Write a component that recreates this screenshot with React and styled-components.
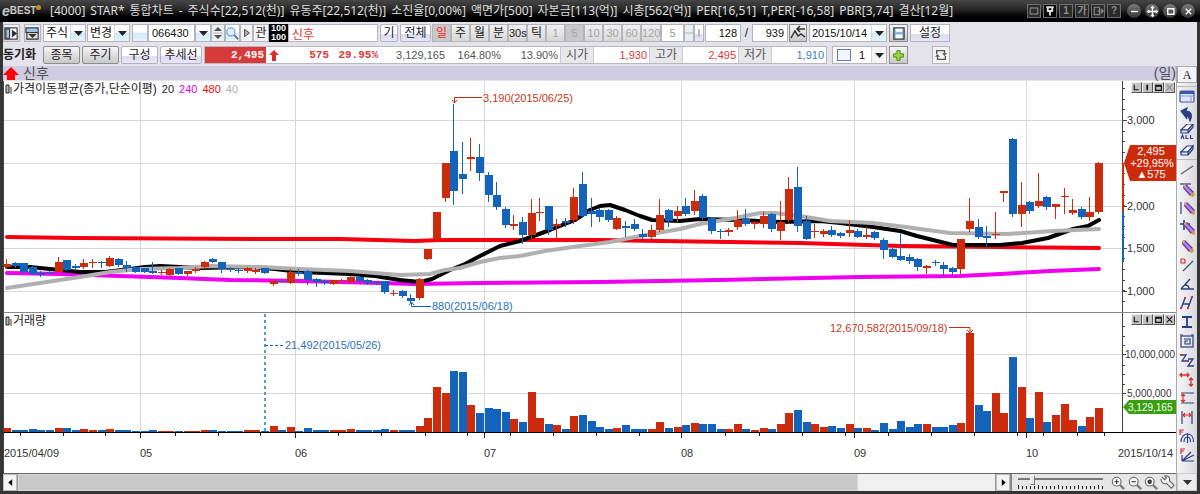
import React from "react";
import styled, { createGlobalStyle, css } from "styled-components";

const RED = "#cc2b0c";
const BLUE = "#1463bb";

const GlobalStyle = createGlobalStyle`
  * { box-sizing: border-box; }
  body {
    margin: 0;
    background: #333;
    font-family: "Liberation Sans", "Noto Sans CJK KR", sans-serif;
    font-size: 12px;
    line-height: 14px;
    color: #222;
  }
  button, input, select { font: inherit; color: inherit; margin: 0; }
`;

/* ---------- window frame ---------- */

const Window = styled.div`
  border: solid #353535;
  border-width: 0 3px 3px;
  background: #e4e2ea;
  min-width: 1100px;
`;

const TitleBar = styled.header`
  display: flex;
  align-items: center;
  height: 22px;
  margin: 0 -3px;
  padding: 0 5px 0 2px;
  background: linear-gradient(#464646, #2a2a2a 40%, #000 75%, #000);
  color: #dcdcdc;
  white-space: nowrap;
`;

const Logo = styled.div`
  display: flex;
  align-items: center;
  width: 48px;
  font-size: 10px;
  font-weight: bold;
  color: #c8c8c8;
`;

const LogoE = styled.span`
  font-size: 14px;
  font-style: italic;
`;

const LogoDot = styled.i`
  width: 5px;
  height: 5px;
  margin-bottom: 8px;
  border-radius: 50%;
  background: #c98a2c;
`;

const Title = styled.h1`
  display: flex;
  flex: 1;
  gap: 5px;
  min-width: 0;
  margin: 0;
  font-family: "Noto Sans", "Noto Sans CJK KR", sans-serif;
  font-size: 12px;
  font-weight: normal;
  line-height: 18px;
  overflow: hidden;
`;

const TitleTools = styled.div`
  display: flex;
  gap: 2px;
  margin-right: 6px;
`;

const TitleTool = styled.button`
  display: grid;
  place-items: center;
  width: 14px;
  height: 14px;
  padding: 0;
  border: 1px solid #6e6e6e;
  background: ${(p) => (p.$on ? "#000" : "#2c2c2c")};
  color: ${(p) => (p.$on ? "#ddd" : "#8c8c8c")};
  font-size: 10px;
  font-weight: bold;
  line-height: 10px;
`;

const WindowButtons = styled.div`
  display: flex;
  gap: 4px;
`;

const RoundButton = styled.button`
  display: grid;
  place-items: center;
  width: 14px;
  height: 14px;
  padding: 0;
  border: 0;
  border-radius: 50%;
  background: linear-gradient(#7a7a7a, #333);
  color: #fff;
`;

/* ---------- toolbars ---------- */

const ToolRow = styled.div`
  display: flex;
  align-items: center;
  height: 22px;
  white-space: nowrap;
`;

const Gap = styled.span`
  flex: none;
  width: ${(p) => p.$w}px;
`;

const frame = css`
  flex: none;
  width: ${(p) => p.$w}px;
  height: 18px;
  border: 1px solid #b4b4bc;
  background: #fff;
`;

const looks = {
  lilac: "linear-gradient(#fff 55%, #dcdcf0 60%, #e6e6f6)",
  grey: "linear-gradient(#f6f6f6, #c8c8c8)",
  tab: "linear-gradient(#f0f0f0, #d8d8d8)",
  pressed: "#c9c9cb",
  plain: "#f4f4f6",
  blue: "linear-gradient(#fff 45%, #d3e9f8 50%, #e4f3fc)",
};

const ToolButton = styled.button`
  ${frame}
  display: grid;
  place-items: center;
  padding: 0;
  border-color: ${(p) => (p.$look === "grey" ? "#8e8e8e" : "#b4b4bc")};
  border-radius: ${(p) => (p.$round ? 2 : 0)}px;
  background: ${(p) => looks[p.$look || "lilac"]};
  color: ${(p) => p.$color || "#222"};
  font-size: ${(p) => p.$size || 12}px;
  line-height: 14px;
  &:disabled { color: #a4a4a6; }
`;

const TextField = styled.input`
  ${frame}
  padding: 0 3px;
  text-align: ${(p) => p.$align || "left"};
  color: ${(p) => p.$color || "#111"};
  font-size: ${(p) => p.$size || 12}px;
`;

const SelectFrame = styled.label`
  ${frame}
  display: flex;
  align-items: stretch;
  font-size: ${(p) => p.$size || 12}px;
`;

const NativeSelect = styled.select`
  flex: 1;
  min-width: 0;
  padding: 0 0 0 2px;
  border: 0;
  appearance: none;
  background: transparent;
  color: #111;
`;

const SelectArrow = styled.span`
  display: grid;
  place-items: center;
  width: 15px;
  background: ${(p) => (p.$plain ? "#f4f4f4" : looks.blue)};
  border-left: 1px solid #d4d8e0;
`;

const Spinner = styled.div`
  ${frame}
  display: grid;
  place-items: center;
  background: #e9eef4;
`;

const Hundred = styled.div`
  width: 19px;
  height: 18px;
  background: #000;
  color: #fff;
  font-size: 9px;
  font-weight: bold;
  line-height: 9px;
  text-align: center;
`;

const Slash = styled.span`
  width: 11px;
  text-align: center;
`;

const SyncLabel = styled.strong`
  width: 40px;
  font-size: 12px;
`;

const Quote = styled.div`
  display: flex;
  align-items: stretch;
  height: 18px;
  border: 1px solid #b8b8c0;
  background: #fff;
  font-size: 11px;
  line-height: 16px;
`;

const QuoteCell = styled.span`
  width: ${(p) => p.$w}px;
  padding-right: 2px;
  text-align: right;
  color: ${(p) => p.$color || "#555"};
`;

const QuoteStrong = styled(QuoteCell)`
  font-family: "Liberation Mono", monospace;
  font-weight: bold;
  background: ${(p) => p.$bg || "transparent"};
`;

const QuoteLabel = styled.span`
  width: 34px;
  border: solid #ccc;
  border-width: 0 1px;
  background: #e8e8ea;
  font-size: 12px;
  text-align: center;
  color: #555;
`;

const QuoteArrow = styled.span`
  display: grid;
  place-items: center;
  width: 16px;
`;

const Swatch = styled.i`
  width: 14px;
  height: 12px;
  margin: 2px 6px 0 4px;
  border: 1px solid #5b7fc6;
  background: #f4f6ff;
`;

/* ---------- chart area ---------- */

const Body = styled.div`
  display: grid;
  grid-template-columns: minmax(0, 1fr) 21px;
`;

const Main = styled.main`
  min-width: 0;
`;

const Strip = styled.div`
  display: flex;
  align-items: center;
  justify-content: space-between;
  height: 14px;
  margin-bottom: 1px;
  background: #cfcbe3;
  color: #505050;
  font-size: 14px;
  line-height: 14px;
`;

const StripName = styled.span`
  display: flex;
  align-items: center;
  gap: 4px;
`;

const Pane = styled.section`
  position: relative;
  display: grid;
  grid-template: 100% / minmax(0, 1fr) 54px;
  height: ${(p) => p.$h}px;
  border-bottom: 1px solid ${(p) => p.$line};
  border-left: 1px solid #444;
  background: #fff;
`;

const Canvas = styled.svg`
  display: block;
  width: 100%;
  height: 100%;
  overflow: ${(p) => (p.$spill ? "visible" : "hidden")};
  font-size: ${(p) => p.$size || 11}px;
`;

const Legend = styled.div`
  position: absolute;
  top: 1px;
  left: 1px;
  display: flex;
  align-items: center;
  gap: 5px;
  font-size: 11px;
`;

const LegendName = styled.span`
  display: flex;
  align-items: center;
  gap: 1px;
  font-size: 12px;
`;

const LegendPeriod = styled.span`
  color: ${(p) => p.$color};
`;

const PaneButtons = styled.div`
  position: absolute;
  top: 1px;
  right: 1px;
  display: flex;
`;

const PaneButton = styled.button`
  display: grid;
  place-items: center;
  width: 11px;
  height: 11px;
  padding: 0;
  border: 1px solid;
  border-color: #eee #555 #555 #eee;
  background: #c4c4c4;
  color: #111;
  &:disabled { color: #8c8c8c; }
`;

const DateAxis = styled.div`
  display: grid;
  grid-template: 100% / minmax(0, 1fr) 54px;
  height: 40px;
  border-left: 1px solid #444;
  background: #fff;
`;

/* ---------- bottom bar ---------- */

const BottomBar = styled.footer`
  display: flex;
  align-items: stretch;
  height: 18px;
  border-top: 1px solid #666;
  background: #e6e6e6;
`;

const ScrollTrack = styled.div`
  flex: 1;
  display: flex;
  background: #f0f0f0;
  border: solid #999;
  border-width: 0 1px;
`;

const ScrollThumb = styled.div`
  width: 86%;
  background: #c8c8c8;
  border: 1px solid #d8d8d8;
`;

const EndButton = styled.button`
  display: grid;
  place-items: center;
  width: 14px;
  padding: 0;
  border: 1px solid #bbb;
  background: #f4f4f4;
`;

const ZoomBox = styled.div`
  display: flex;
  flex-direction: column;
  align-items: stretch;
  width: 100px;
  padding: 1px 7px 0 6px;
  border-left: 2px solid #888;
`;

const ZoomSlider = styled.input`
  width: 100%;
  height: 10px;
  margin: 0;
  appearance: none;
  background: linear-gradient(#777, #777) 0 3px / 100% 2px no-repeat;
  &::-webkit-slider-thumb {
    appearance: none;
    width: 5px;
    height: 10px;
    border: 1px solid;
    border-color: #fff #777 #777 #fff;
    background: #e6e6e6;
  }
`;

const ZoomTools = styled.div`
  display: flex;
  width: 66px;
  justify-content: space-between;
`;

const BareButton = styled.button`
  display: grid;
  place-items: center;
  width: 16px;
  padding: 0;
  border: 0;
  background: none;
`;

/* ---------- drawing tools ---------- */

const Side = styled.aside`
  display: flex;
  flex-direction: column;
  align-items: stretch;
  border-left: 1px solid #aaa;
  background: linear-gradient(90deg, #f6f6f8, #dadade);
`;

const SideHead = styled.button`
  height: 17px;
  margin-bottom: 3px;
  padding: 0;
  border: 1px solid #aaa;
  background: #f4f4f6;
  font-family: "Liberation Serif", serif;
  font-size: 12px;
  line-height: 14px;
`;

const SideGroup = styled.div`
  display: grid;
  grid-auto-rows: ${(p) => p.$row}px;
  border-top: 1px solid #bbb;
`;

const SideTool = styled.button`
  display: grid;
  place-items: center;
  padding: 0;
  border: 0;
  background: none;
`;

const SideMore = styled.button`
  display: grid;
  place-items: center;
  height: 18px;
  margin-top: auto;
  padding: 0;
  border: 1px solid #ccc;
  background: #ececee;
`;

/* ---------- data: y positions on the price scale ---------- */
/* [direction, body top, body bottom, high, low] */
const U = 1;
const D = 0;
const candles = [
  [U,264,267,259,268],[D,263,266,262,267],[D,263,272,263,273],[D,267,274,266,274],[D,273,275,271,276],[D,272,273,271,273],
  [U,262,272,257,272],[D,260,270,260,270],[D,266,268,264,270],[U,263,267,259,268],[U,262,263,259,267],[D,262,263,261,267],
  [U,258,266,256,266],[D,259,265,258,266],[D,265,268,261,271],[D,267,272,267,272],[D,268,272,268,272],[D,271,273,262,273],
  [U,272,273,270,274],[U,269,275,268,275],[D,268,274,268,274],[U,271,274,271,275],[U,269,271,267,272],[U,262,267,261,268],
  [D,259,262,258,262],[D,262,269,262,272],[D,269,270,267,271],[D,270,271,268,272],[U,268,271,267,272],[U,270,272,268,273],
  [D,268,273,268,273],[U,281,284,281,285],[D,281,282,281,282],[U,272,283,269,283],[D,272,274,269,275],[D,271,280,270,284],
  [D,279,282,278,286],[D,281,283,280,284],[U,280,284,280,284],[U,280,281,279,281],[U,277,282,276,282],[D,277,281,276,282],
  [D,280,283,279,284],[D,282,283,281,284],[D,281,292,281,293],[U,293,294,290,295],[D,291,296,290,297],[D,298,301,294,302],
  [U,279,298,278,299],[U,249,259,249,259],[U,212,239,212,240],[U,163,198,163,201],[D,151,191,104,204],[D,174,179,142,193],
  [U,157,159,138,170],[D,157,173,144,180],[D,175,195,172,201],[D,195,207,182,209],[D,209,225,207,227],[U,224,226,215,229],
  [D,222,235,217,243],[U,213,235,199,238],[U,212,213,198,220],[D,206,230,206,234],[U,224,226,219,237],[D,221,223,218,226],
  [U,197,220,188,223],[D,184,216,172,217],[D,211,214,198,226],[D,210,217,208,221],[D,210,220,209,221],[U,218,229,216,229],
  [D,226,228,221,236],[D,224,229,219,230],[D,234,237,229,238],[U,230,237,225,238],[U,215,230,199,231],[D,210,221,209,226],
  [U,211,216,206,222],[D,206,214,198,215],[U,201,211,190,214],[D,196,218,194,219],[D,218,231,217,233],[D,231,232,229,238],
  [U,230,232,228,235],[U,220,227,210,229],[D,219,224,209,225],[U,222,224,221,228],[U,216,224,212,227],[D,214,229,213,231],
  [U,222,231,201,239],[U,189,220,177,221],[D,187,226,167,231],[D,221,239,216,239],[U,231,232,224,237],[U,231,234,229,236],
  [D,230,235,226,236],[D,233,236,232,237],[U,230,233,220,236],[D,231,237,229,237],[U,235,237,227,238],[D,232,238,231,239],
  [D,240,250,238,258],[D,249,257,248,257],[D,256,260,234,260],[D,257,261,254,263],[D,259,267,258,270],[U,266,268,265,273],
  [D,262,263,260,265],[D,265,269,262,275],[D,268,272,267,274],[U,239,269,239,273],[U,221,229,198,231],[D,227,237,219,238],
  [D,236,238,226,247],[U,234,235,212,238],[U,191,193,191,201],[D,139,214,138,216],[U,205,214,182,226],[D,202,211,201,213],
  [U,201,206,173,207],[D,197,207,196,209],[U,204,207,204,218],[U,196,197,188,213],[U,210,213,199,214],[D,209,217,207,218],
  [U,212,217,197,220],[U,163,212,162,213],
];

const volumes = [
  4,2,2,3,2,2,4,4,2,3,2,2,3,2,2,1,1,2,1,1,1,1,1,2,2,1,1,1,2,2,1,6,2,5,1,4,
  2,2,2,2,3,2,2,2,3,2,2,2,6,14,45,39,61,60,27,19,24,23,20,13,10,40,14,8,7,3,16,17,11,5,3,4,
  7,3,3,3,10,4,5,7,9,8,8,3,3,8,3,2,4,3,8,19,22,10,8,5,6,4,8,4,4,2,9,3,11,5,8,8,5,5,7,9,
  99,27,21,39,19,75,45,14,40,10,17,28,12,6,15,24,
];

const averages = [
  ["#f40010", "7,237 75,238 257,239 340,239 415,241 440,240 600,240 660,241 800,243 900,246 1000,247 1099,248"],
  ["#f000f0", "7,273 60,274 120,276 180,278 230,280 300,281 380,283 415,284 480,283 600,282 720,280 860,277 960,276 1000,274 1050,271 1099,269"],
  ["#000", "7,267 30,267 60,270 80,272 105,272 130,269 145,267 160,266 200,268 250,267 275,269 300,272 350,274 375,276 400,280 420,282 432,279 450,270 465,264 480,256 500,246 520,241 550,230 575,220 590,210 600,206 610,205 625,210 640,216 652,220 680,221 700,219 740,220 780,222 820,221 840,223 873,227 900,231 917,236 953,245 1000,245 1022,243 1048,238 1073,229 1088,226 1099,220"],
  ["#b0b0b0", "7,288 40,283 80,277 110,272 140,269 180,268 210,266 260,267 300,269 350,271 400,275 430,274 445,270 460,268 480,262 500,258 520,256 545,251 580,246 610,242 640,236 680,229 700,224 735,218 760,213 775,213 800,216 830,221 873,223 906,227 920,229 950,233 1007,234 1053,231 1099,229"],
];

const months = [[140, "05"], [295, "06"], [484, "07"], [681, "08"], [854, "09"], [1026, "10"]];
const weeks = [20,63,105,175,218,260,338,381,425,467,510,553,596,639,725,759,802,845,888,931,974,1017,1043,1077,1104];

const PLOT_LEFT = 4;
const PLOT_WIDTH = 1118;
const candleX = (i) => 7 + (i * 1092) / 127;
const pct = (x) => `${((x - PLOT_LEFT) / PLOT_WIDTH) * 100}%`;

/* ---------- icons ---------- */

const Icon = ({ size = 16, children, ...rest }) => (
  <svg width={size} height={size} viewBox="0 0 16 16" fill="none" stroke="#333" strokeWidth="1.2" aria-hidden="true" {...rest}>
    {children}
  </svg>
);

const Down = ({ color = "#222" }) => (
  <svg width="9" height="5" viewBox="0 0 9 5" aria-hidden="true"><path d="M0 0h9L4.5 5z" fill={color} /></svg>
);

const Pencil = ({ x = 0, y = 0 }) => (
  <g transform={`translate(${x} ${y})`} stroke="none">
    <path d="M3 3l3-1 8 8-4 4-7-8z" fill="#6a3aa8" />
    <path d="M5 3l8 8-2 2-7-8z" fill="#b48ae0" />
    <path d="M10 14l4-4 1 3-2 2z" fill="#e0a030" />
    <path d="M3 3l3-1-2 4z" fill="#e8b860" />
  </g>
);

const NAVY = "#2b3f86";
const HOT = "#d23030";

const Eraser = ({ y = 0 }) => (
  <g transform={`translate(0 ${y})`} stroke={NAVY}>
    <path d="M2 8l6-6h6l-5 6z" fill="#fff" />
    <path d="M2 8v3h7V8zM9 11l5-6V2L9 8" fill="#dfe3f4" />
  </g>
);

const sideTop = [
  ["창", <><rect x="1" y="3" width="14" height="11" rx="1" fill="#dfe6fb" stroke="#3c56ae" /><path d="M1 4.500h14" stroke="#3c56ae" strokeWidth="3" /><path d="M2 8h12M12 8v5" stroke="#8ea2dc" /></>],
  ["실행 취소", <path d="M2 5l6-3-1 3c5 0 7 4 4 10-1-1 0-5-4-5l1 3z" fill={NAVY} stroke={NAVY} />],
  ["모두 지우기", <><Eraser y={-2} /><path d="M2 15l1.500-4L5 15M7 11v3.500h2.500M11.500 11v3.500H14" stroke={NAVY} /></>],
  ["지우기", <Eraser y={2} />],
];

const sideRest = [
  ["추세선", <path d="M2 12L14 4" stroke="#667" strokeWidth="1.500" />],
  ["수평선", <><path d="M1 3h11" stroke={NAVY} /><Pencil x={1} y={1} /></>],
  ["수직선", <><path d="M2 2v12" stroke={NAVY} /><Pencil x={2} /></>],
  ["십자선", <><path d="M1 5h10M5 1v10" stroke={NAVY} strokeWidth="1.600" /><Pencil x={2} y={1} /></>],
  ["연필", <Pencil />],
  ["D 추세선", <><path d="M2 2h3l1 1v3H2z" stroke={HOT} /><path d="M4 14L14 4" stroke="#4a5378" /></>],
  ["각도선", <path d="M2 13h13M2 13L11 3M6 9c3 0 4 2 4 4" stroke={NAVY} strokeWidth="1.400" />],
  ["평행선", <><path d="M2 14L6 3M9 13l4-11M4 9h7" stroke={NAVY} strokeWidth="1.400" /><path d="M5 2h2v2H5zM12 1h2v2h-2zM1 12h2v2H1zM8 12h2v2H8z" fill={HOT} stroke="none" /></>],
  ["구간", <path d="M3 3h10M3 13h10M8 3v10" stroke={NAVY} strokeWidth="1.800" />],
  ["사각형", <><rect x="2" y="3" width="12" height="11" stroke={NAVY} /><path d="M5 6h6v5H6V8h3M1 2h3M12 2h3" stroke={NAVY} /></>],
  ["파동선", <><path d="M2 3h5L3 9h5M9 7h5l-5 7h6" stroke={NAVY} strokeWidth="1.300" /><path d="M1 2h2v2H1zM8 8h2v2H8z" fill={HOT} stroke="none" /></>],
  ["이동", <path d="M1 4h9M3 2L1 4l2 2M8 2l2 2-2 2M12 7v8M10 9l2-2 2 2M10 13l2 2 2-2" stroke={HOT} strokeWidth="1.300" />],
  ["가격폭", <><path d="M2 3h13M2 13h13" stroke={NAVY} /><path d="M4 4v8M2 6l2-2 2 2M2 10l2 2 2-2" stroke={HOT} /></>],
  ["기간폭", <><path d="M3 2v13M13 2v13" stroke={NAVY} /><path d="M4 6h8M6 4L4 6l2 2M10 4l2 2-2 2" stroke={HOT} /></>],
  ["피보나치 호", <><path d="M2 14c0-5 3-8 6.500-8s6 3 6 8M5 14c0-3 1-5 3.500-5s3 2 3 5M8.500 5v10" stroke={NAVY} /><path d="M1 7V2h4M1 4h3" stroke={HOT} /></>],
  ["피보나치 팬", <><path d="M3 14l9-9M3 14L15 8M3 14V8M3 14h12" stroke={NAVY} /><path d="M2 7V2h4M2 4h3" stroke={HOT} /></>],
];

/* ---------- parts ---------- */

const Select = ({ w, label, value, plain, size, children }) => (
  <SelectFrame $w={w} $size={size}>
    {children}
    <NativeSelect aria-label={label} defaultValue={value}>
      <option>{value}</option>
    </NativeSelect>
    <SelectArrow $plain={plain}><Down /></SelectArrow>
  </SelectFrame>
);

const PaneControls = ({ lastDisabled }) => (
  <PaneButtons>
    {[
      ["왼쪽", "M4 3v9h8"],
      ["세로", "M8 3v10M7 3v10"],
      ["최대화", "M3 4h10v9H3zM3 5.500h10"],
      ["닫기", "M3 3l10 10M13 3L3 13"],
    ].map(([name, d], i) => (
      <PaneButton key={name} aria-label={name} disabled={lastDisabled && i === 3}>
        <Icon size={9} stroke="currentColor" strokeWidth="2"><path d={d} /></Icon>
      </PaneButton>
    ))}
  </PaneButtons>
);

const Marker = () => (
  <svg width="7" height="10" viewBox="0 0 7 10" aria-hidden="true">
    <path d="M1 1h3v8H1z" fill="#bbb" stroke="#222" /><path d="M5 3h2v7H5z" fill="#999" />
  </svg>
);

const Grid = ({ rows, top, height }) => (
  <g stroke="#d8d8da" shapeRendering="crispEdges">
    {rows.map((y) => <path key={y} d={`M4 ${y}.5H1122`} />)}
    {months.map(([x]) => <path key={x} d={`M${x}.5 ${top}v${height}`} />)}
  </g>
);

function PricePane() {
  return (
    <Pane $h={232} $line="#888">
      <Canvas>
        <svg width="100%" height="100%" viewBox="4 81 1118 231" preserveAspectRatio="none">
          <Grid rows={[120, 163, 206, 248, 291]} top={81} height={231} />
          {averages.map(([color, points]) => (
            <polyline key={color} points={points} fill="none" stroke={color} strokeWidth="4" strokeLinejoin="round" strokeLinecap="round" />
          ))}
          {candles.map(([up, top, bottom, high, low], i) => {
            const x = candleX(i);
            const fill = up ? RED : BLUE;
            return (
              <g key={i} fill={fill}>
                <rect x={Math.round(x) - 1} y={high} width="1" height={low - high + 1} />
                <rect x={Math.round(x) - 4} y={top} width="8" height={Math.max(1, bottom - top)} />
              </g>
            );
          })}
          <path d="M482 97.500H454.500v5M452 100l2.500 3 2.500-3" fill="none" stroke={RED} />
          <path d="M431 306.500H411.500v-4M409 305l2.500-3 2.500 3" fill="none" stroke={BLUE} />
        </svg>
        <text x={pct(483)} y="21" fill="#c03a22">3,190(2015/06/25)</text>
        <text x={pct(432)} y="229" fill="#2a72bd">880(2015/06/18)</text>
      </Canvas>
      <Canvas viewBox="1122 81 54 231">
        <path d="M1122.500 81v231" stroke="#444" />
        <g stroke="#444">
          {Array.from({ length: 21 }, (_, i) => 88 + Math.round(i * 10.65)).map((y) => <path key={y} d={`M1123 ${y}.5h2`} />)}
          {[120, 206, 248, 291].map((y) => <path key={y} d={`M1123 ${y}.5h4`} />)}
        </g>
        <path d="M1123 163v49" stroke={RED} strokeWidth="2" />
        <path d="M1123 212v50" stroke={BLUE} strokeWidth="2" />
        <g fill="#333">
          <text x="1127" y="124">3,000</text>
          <text x="1127" y="210">2,000</text>
          <text x="1127" y="252">1,500</text>
          <text x="1127" y="295">1,000</text>
        </g>
        <path d="M1124 163l6-18h46v36h-46z" fill={RED} />
        <g fill="#fff" textAnchor="middle">
          <text x="1151" y="155">2,495</text>
          <text x="1152" y="167">+29,95%</text>
          <text x="1151" y="178">▲575</text>
        </g>
      </Canvas>
      <Legend>
        <LegendName><Marker />가격이동평균(종가,단순이평)</LegendName>
        <LegendPeriod $color="#222">20</LegendPeriod>
        <LegendPeriod $color="#e800e8">240</LegendPeriod>
        <LegendPeriod $color="#e01010">480</LegendPeriod>
        <LegendPeriod $color="#b0b0b0">40</LegendPeriod>
      </Legend>
      <PaneControls lastDisabled />
    </Pane>
  );
}

function VolumePane() {
  return (
    <Pane $h={120} $line="#000">
      <Canvas>
        <svg width="100%" height="100%" viewBox="4 313 1118 119" preserveAspectRatio="none">
          <Grid rows={[354, 393]} top={313} height={119} />
          <path d="M265 314v118" stroke="#5a9ad8" strokeWidth="2" strokeDasharray="3 3" />
          {volumes.map((v, i) => (
            <rect key={i} x={Math.round(candleX(i)) - 4} y={432 - v} width="8" height={v} fill={candles[i][0] ? RED : BLUE} />
          ))}
          <path d="M265 345.500h20" stroke={BLUE} strokeDasharray="3 2" />
          <path d="M949 327.500h21v5M967 330l3 3 3-3" fill="none" stroke={RED} />
        </svg>
        <text x={pct(285)} y="36" fill="#2a72bd">21,492(2015/05/26)</text>
        <text x={pct(830)} y="19" fill="#c03a22">12,670,582(2015/09/18)</text>
      </Canvas>
      <Canvas viewBox="1122 313 54 119" $size={10}>
        <path d="M1122.500 313v119" stroke="#444" />
        <g stroke="#444">
          {[326, 336, 345, 365, 374, 384].map((y) => <path key={y} d={`M1123 ${y}.5h2`} />)}
          {[354, 393].map((y) => <path key={y} d={`M1123 ${y}.5h3`} />)}
        </g>
        <g fill="#333">
          <text x="1125" y="358">10,000,000</text>
          <text x="1127" y="397">5,000,000</text>
        </g>
        <path d="M1123 407l6-7h47v14h-47z" fill="#38a010" />
        <text x="1128" y="411" fill="#fff">3,129,165</text>
      </Canvas>
      <Legend><LegendName><Marker />거래량</LegendName></Legend>
      <PaneControls />
    </Pane>
  );
}

function Dates() {
  return (
    <DateAxis>
      <Canvas $spill fill="#333">
        <svg width="100%" height="6" viewBox="4 0 1118 6" preserveAspectRatio="none">
          <g stroke="#222">
            {months.map(([x]) => <path key={x} d={`M${x}.5 0v5`} />)}
            {weeks.map((x) => <path key={x} d={`M${x}.5 0v3`} />)}
          </g>
        </svg>
        <text x="0" y="24">2015/04/09</text>
        {months.map(([x, name]) => <text key={name} x={pct(x)} y="24">{name}</text>)}
        <text x={pct(1118)} y="24">2015/10/14</text>
      </Canvas>
    </DateAxis>
  );
}

const titleParts = [
  "[4000]", "STAR*", "통합차트", "-", "주식수[22,512(천)]", "유동주[22,512(천)]", "소진율[0,00%]", "액면가[500]",
  "자본금[113(억)]", "시총[562(억)]", "PER[16,51]", "T,PER[-16,58]", "PBR[3,74]", "결산[12월]",
];

const titleTools = [
  ["창", <rect x="3" y="4" width="10" height="8" />],
  ["고정", <path d="M3 3h10M5 3v5h6V3M8 8v6" strokeWidth="2.500" />, true],
  ["1", "1"],
  ["글자", "가"],
  ["내보내기", <path d="M10 3H3v10h7V3M7 8h7M12 5l3 3-3 3" />],
  ["도움말", "?"],
];

const windowTools = [
  ["최소화", "M3 8h10"],
  ["이동", "M8 1v14M1 8h14M6 3l2-2 2 2M6 13l2 2 2-2M3 6L1 8l2 2M13 6l2 2-2 2"],
  ["최대화", "M4 4h9v8H4z"],
  ["닫기", "M4 4l8 8M12 4l-8 8"],
];

export default function App() {
  return (
    <>
      <GlobalStyle />
      <Window>
        <TitleBar>
          <Logo><LogoE>e</LogoE>BEST<LogoDot /></Logo>
          <Title>
            {titleParts.map((part) => <span key={part}>{part}</span>)}
          </Title>
          <TitleTools>
            {titleTools.map(([name, mark, on]) => (
              <TitleTool key={name} aria-label={name} $on={on}>
                {typeof mark === "string" ? mark : <Icon size={12} stroke="currentColor" strokeWidth="1.500">{mark}</Icon>}
              </TitleTool>
            ))}
          </TitleTools>
          <WindowButtons>
            {windowTools.map(([name, d]) => (
              <RoundButton key={name} aria-label={name}>
                <Icon size={11} stroke="#fff" strokeWidth="2"><path d={d} /></Icon>
              </RoundButton>
            ))}
          </WindowButtons>
        </TitleBar>

        <ToolRow>
          <ToolButton $w={17} $look="tab" aria-label="왼쪽 패널">
            <Icon size={15}><rect x="1" y="2" width="13" height="12" fill="#fff" /><path d="M2 3h4v10H2z" fill="#9cc4ea" /><path d="M9 5l4 3-4 3z" fill="#222" /></Icon>
          </ToolButton>
          <Gap $w={4} />
          <ToolButton $w={17} $look="tab" aria-label="위쪽 패널">
            <Icon size={15}><rect x="1" y="2" width="13" height="5" fill="#9cc4ea" /><path d="M2 7v7h12V7" /><path d="M5 9h6l-3 3z" fill="#222" /></Icon>
          </ToolButton>
          <Gap $w={2} />
          <Select w={43} label="시장" value="주식" />
          <Gap $w={1} />
          <Select w={43} label="종목 변경" value="변경" />
          <Gap $w={2} />
          <ToolButton $w={16} $look="blue" aria-label="목록" />
          <TextField $w={47} aria-label="종목코드" defaultValue="066430" $size={11} />
          <ToolButton $w={16} $look="blue" aria-label="종목 목록"><Down /></ToolButton>
          <Spinner $w={14}>
            <svg width="10" height="16" viewBox="0 0 10 16" aria-hidden="true"><path d="M5 2l4 4H1zM5 14l4-4H1z" fill="#555" /><path d="M0 8h10" stroke="#bbb" /></svg>
          </Spinner>
          <ToolButton $w={15} $look="blue" aria-label="검색">
            <Icon size={13} stroke="#4a8fd0"><circle cx="6" cy="6" r="5" fill="#dff0fc" /><path d="M10 10l5 5" stroke="#777" strokeWidth="2.500" /></Icon>
          </ToolButton>
          <ToolButton $w={13} $look="plain" aria-label="다음">
            <Icon size={10}><path d="M4 2l8 6-8 6z" fill="#aaa" /></Icon>
          </ToolButton>
          <ToolButton $w={16} $look="plain">관</ToolButton>
          <Hundred>100<br />100</Hundred>
          <TextField $w={90} aria-label="종목명" defaultValue="신후" $color="#d83a30" />
          <Gap $w={2} />
          <ToolButton $w={18} $round>기</ToolButton>
          <Gap $w={2} />
          <ToolButton $w={31} $round>전체</ToolButton>
          <Gap $w={1} />
          <ToolButton $w={19} $look="pressed" $color="#f02818">일</ToolButton>
          {["주", "월", "분"].map((t) => <ToolButton key={t} $w={19} $look="tab">{t}</ToolButton>)}
          <ToolButton $w={19} $look="tab" $size={11}>30s</ToolButton>
          <ToolButton $w={19} $look="tab">틱</ToolButton>
          {["1", "5", "10", "30", "60"].map((t) => (
            <ToolButton key={t} $w={19} $look={t === "5" ? "pressed" : "tab"} $size={11} disabled>{t}</ToolButton>
          ))}
          <ToolButton $w={20} $look="tab" $size={11} disabled>120</ToolButton>
          <TextField $w={23} aria-label="분 단위" defaultValue="5" $align="center" $color="#999" $size={11} disabled />
          <Spinner $w={10}><Icon size={8} stroke="#999"><path d="M0 8h16" /></Icon></Spinner>
          <ToolButton $w={10} aria-label="조절"><Icon size={8} stroke="#aab"><path d="M8 0v16" strokeWidth="3" /></Icon></ToolButton>
          <Gap $w={1} />
          <TextField $w={36} aria-label="조회 봉 수" defaultValue="128" $align="right" $size={11} />
          <Slash>/</Slash>
          <TextField $w={36} aria-label="전체 봉 수" defaultValue="939" $align="right" $size={11} />
          <Gap $w={1} />
          <ToolButton $w={18} $look="grey" aria-label="차트 이동">
            <Icon size={16}><path d="M1 13l4-7 3 5 3-2 4 3M7 4h8M10 1L7 4l3 3" strokeWidth="1.500" /></Icon>
          </ToolButton>
          <Gap $w={2} />
          <Select w={78} label="기준일" value="2015/10/14" size={11} />
          <Gap $w={2} />
          <ToolButton $w={19} $look="grey" aria-label="저장">
            <Icon size={15}><rect x="3" y="2" width="11" height="12" fill="#8db4d8" /><path d="M5 3h7v3H5zM5 9h7v4H5z" fill="#fff" stroke="none" /></Icon>
          </ToolButton>
          <Gap $w={2} />
          <ToolButton $w={40}>설정</ToolButton>
        </ToolRow>

        <ToolRow>
          <SyncLabel>동기화</SyncLabel>
          <ToolButton $w={37} $look="grey" $round>종목</ToolButton>
          <Gap $w={2} />
          <ToolButton $w={37} $look="grey" $round>주기</ToolButton>
          <Gap $w={2} />
          <ToolButton $w={37} $round>구성</ToolButton>
          <Gap $w={2} />
          <ToolButton $w={42} $round>추세선</ToolButton>
          <Gap $w={2} />
          <Quote>
            <QuoteStrong $w={61} $bg="#d83a3a" $color="#fff">2,495</QuoteStrong>
            <QuoteArrow>
              <svg width="10" height="11" viewBox="0 0 10 11" aria-hidden="true"><path d="M5 0l5 5H7v6H3V5H0z" fill="#d83030" /></svg>
            </QuoteArrow>
            <QuoteStrong $w={49} $color="#d83a3a">575</QuoteStrong>
            <QuoteStrong $w={49} $color="#d83a3a">29.95%</QuoteStrong>
            <QuoteCell $w={67}>3,129,165</QuoteCell>
            <QuoteCell $w={56}>164.80%</QuoteCell>
            <QuoteCell $w={57}>13.90%</QuoteCell>
            <QuoteLabel>시가</QuoteLabel>
            <QuoteCell $w={55} $color="#d83a3a">1,930</QuoteCell>
            <QuoteLabel>고가</QuoteLabel>
            <QuoteCell $w={55} $color="#d83a3a">2,495</QuoteCell>
            <QuoteLabel>저가</QuoteLabel>
            <QuoteCell $w={54} $color="#3a7ad8">1,910</QuoteCell>
          </Quote>
          <Gap $w={5} />
          <Select w={55} label="화면" value="1" plain size={11}><Swatch /></Select>
          <Gap $w={2} />
          <ToolButton $w={19} $look="grey" aria-label="추가">
            <Icon size={13} stroke="#4c8a1c"><path d="M6 2h4v4h4v4h-4v4H6v-4H2V6h4z" fill="#9ad840" /></Icon>
          </ToolButton>
          <Gap $w={24} />
          <ToolButton $w={18} $look="plain" aria-label="새로고침">
            <Icon size={14} stroke="#555"><path d="M3 7V3h9v3M13 9v4H4v-3" strokeWidth="1.500" /><path d="M9 6h6l-3 3zM1 10h6L4 7z" fill="#555" stroke="none" /></Icon>
          </ToolButton>
        </ToolRow>

        <Body>
          <Main>
            <Strip>
              <StripName>
                <svg width="16" height="13" viewBox="0 0 16 13" aria-hidden="true"><path d="M8 0l8 8h-4v5H4V8H0z" fill="#f00" /></svg>
                신후
              </StripName>
              <span>(일)</span>
            </Strip>
            <PricePane />
            <VolumePane />
            <Dates />
            <BottomBar>
              <EndButton aria-label="이전"><Icon size={9}><path d="M11 2v12L4 8z" fill="#000" stroke="none" /></Icon></EndButton>
              <ScrollTrack><ScrollThumb /></ScrollTrack>
              <EndButton aria-label="다음"><Icon size={9}><path d="M5 2v12l7-6z" fill="#000" stroke="none" /></Icon></EndButton>
              <ZoomBox>
                <ZoomSlider type="range" aria-label="확대 비율" min="0" max="100" defaultValue="15" />
                <svg width="100%" height="4" viewBox="0 0 85 4" preserveAspectRatio="none" aria-hidden="true">
                  {Array.from({ length: 22 }, (_, i) => <path key={i} d={`M${i * 4}.5 ${i % 5 ? 1 : 0}v4`} stroke="#222" />)}
                </svg>
              </ZoomBox>
              <ZoomTools>
                {[
                  ["확대", <path d="M4 6.500h5M6.500 4v5" />],
                  ["축소", <path d="M4 6.500h5" />],
                  ["자동", <circle cx="6.500" cy="6.500" r="1.500" strokeWidth="2" />],
                ].map(([name, mark]) => (
                  <BareButton key={name} aria-label={name}>
                    <Icon size={14}><circle cx="6.500" cy="6.500" r="5" fill="#f6f6f6" stroke="#666" />{mark}<path d="M10 10l5 5" stroke="#777" strokeWidth="2.500" /></Icon>
                  </BareButton>
                ))}
                <BareButton aria-label="도구">
                  <Icon size={15} stroke="#666"><path d="M2 2l3 3 2-2-2-2c4-1 6 2 5 5l5 5-3 3-5-5c-3 1-6-1-6-5" fill="#eee" /></Icon>
                </BareButton>
              </ZoomTools>
            </BottomBar>
          </Main>
          <Side>
            <SideHead>A</SideHead>
            <SideGroup $row={18}>
              {sideTop.map(([name, mark]) => <SideTool key={name} aria-label={name}><Icon>{mark}</Icon></SideTool>)}
            </SideGroup>
            <SideGroup $row={19}>
              {sideRest.map(([name, mark]) => <SideTool key={name} aria-label={name}><Icon>{mark}</Icon></SideTool>)}
            </SideGroup>
            <SideMore aria-label="더 보기"><Down color="#333" /></SideMore>
          </Side>
        </Body>
      </Window>
    </>
  );
}
